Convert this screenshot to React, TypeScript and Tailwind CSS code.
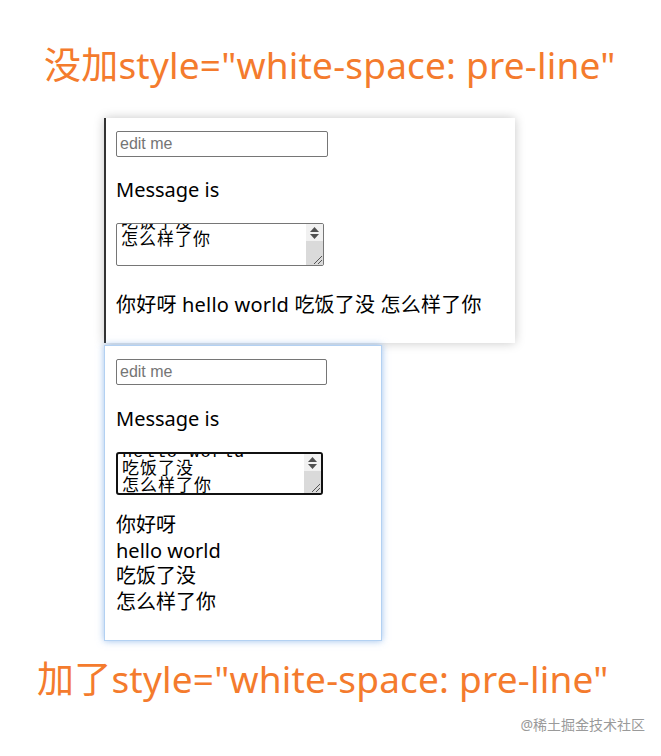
import React from "react";

const CJK = { fontFamily: '"Noto Sans", "Noto Sans CJK SC", sans-serif' };
const TA = { fontFamily: '"Liberation Mono", "Noto Sans CJK SC", monospace' };

function FakeTextarea({ focused, offset }: { focused: boolean; offset: number }) {
  return (
    <div
      className={
        "relative h-[43px] overflow-hidden bg-white " +
        (focused ? "w-[207px] rounded-[3px] border-2 border-[#111]" : "w-[208px] rounded-[2px] border border-[#767676]")
      }
    >
      <div
        className="absolute left-[4px] text-[17px] leading-[17px] tracking-[1px] text-black whitespace-pre"
        style={{ ...TA, top: offset }}
      >
        {"你好呀\nhello world\n吃饭了没\n怎么样了你"}
      </div>
      <div className="absolute right-0 top-0 bottom-0 w-[17px] flex flex-col">
        <div className="h-[17px] bg-[#f1f1f1] flex flex-col items-center justify-center gap-[2px]">
          <svg width="9" height="5" viewBox="0 0 9 5"><polygon points="4.5,0 9,5 0,5" fill="#505050" /></svg>
          <svg width="9" height="5" viewBox="0 0 9 5"><polygon points="0,0 9,0 4.5,5" fill="#505050" /></svg>
        </div>
        <div className="flex-1 bg-[#dadada]" />
      </div>
      <svg className="absolute right-[1px] bottom-[1px]" width="10" height="10" viewBox="0 0 10 10">
        <line x1="2" y1="10" x2="10" y2="2" stroke="#555" strokeWidth="1" />
        <line x1="6" y1="10" x2="10" y2="6" stroke="#555" strokeWidth="1" />
      </svg>
    </div>
  );
}

function Input({ w }: { w: number }) {
  return (
    <div
      className="h-[26px] rounded-[2px] border border-[#767676] bg-white flex items-center px-[3px] text-[16px] text-[#757575]"
      style={{ width: w, fontFamily: '"Liberation Sans", Arial, sans-serif' }}
    >
      edit me
    </div>
  );
}

export default function App() {
  return (
    <div className="relative w-[661px] h-[756px] bg-white overflow-hidden" style={CJK}>
      <div className="pt-[41px] pl-[44px] h-[92px] text-[37px] leading-[48px] tracking-[0.2px] text-[#f47b2d] whitespace-nowrap">
        没加style="white-space: pre-line"
      </div>

      <div className="ml-[104px] mt-[26px] w-[411px] h-[225px] bg-white border-l-2 border-[#333] shadow-[0_0_10px_rgba(0,0,0,0.22)] pl-[10px] pt-[13px]">
        <Input w={212} />
        <div className="mt-[20px] h-[26px] text-[20px] leading-[26px] text-black">Message is</div>
        <div className="mt-[20px]">
          <FakeTextarea focused={false} offset={-43} />
        </div>
        <div className="mt-[26px] text-[20px] leading-[26px] tracking-[0.2px] text-black whitespace-nowrap">
          你好呀 hello world 吃饭了没 怎么样了你
        </div>
      </div>

      <div className="ml-[104px] mt-[2px] w-[278px] h-[296px] bg-white border border-[#b3d1f2] shadow-[0_0_7px_rgba(90,150,225,0.6)] pl-[11px] pt-[13px]">
        <Input w={211} />
        <div className="mt-[21px] h-[26px] text-[20px] leading-[26px] text-black">Message is</div>
        <div className="mt-[20px]">
          <FakeTextarea focused={true} offset={-27} />
        </div>
        <div className="mt-[17px] text-[20px] leading-[25.7px] text-black whitespace-pre-line">
          {"你好呀\nhello world\n吃饭了没\n怎么样了你"}
        </div>
      </div>

      <div className="mt-[14px] pl-[37px] h-[48px] text-[37px] leading-[48px] tracking-[0.2px] text-[#f47b2d] whitespace-nowrap">
        加了style="white-space: pre-line"
      </div>

      <div className="absolute right-[16px] top-[716px] text-[14px] leading-[18px] text-[#9a9a9a] whitespace-nowrap">
        @稀土掘金技术社区
      </div>
    </div>
  );
}
